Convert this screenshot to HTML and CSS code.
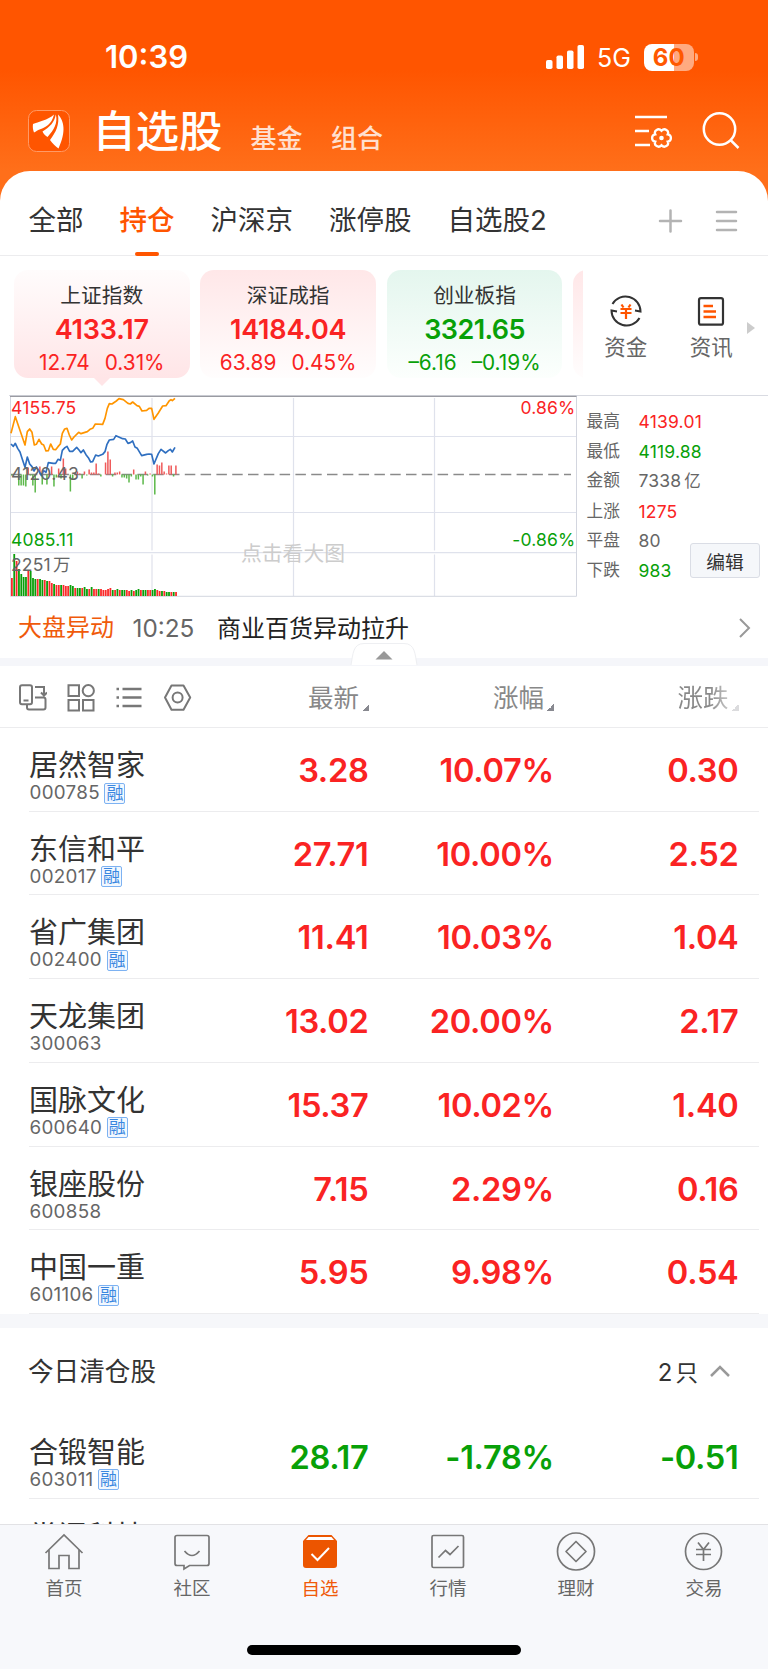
FILE: index.html
```html
<!DOCTYPE html>
<html lang="zh-CN">
<head>
    <meta charset="UTF-8">
    <meta name="viewport" content="width=device-width, initial-scale=1.0">
    <title>自选股</title>
    <link rel="stylesheet" href="styles.css">
</head>
<body>
    <div class="app">
        <header class="header">
            <div class="status-bar">
                <span class="time">10:39</span>
                <svg class="signal" width="38" height="24" fill="#fff">
                    <rect x="0" y="15" width="6.5" height="9" rx="1.8"/>
                    <rect x="10.5" y="10.5" width="6.5" height="13.5" rx="1.8"/>
                    <rect x="21" y="5.5" width="6.5" height="18.5" rx="1.8"/>
                    <rect x="31.5" y="0" width="6.5" height="24" rx="1.8"/>
                </svg>
                <span class="network">5G</span>
                <span class="battery">60</span>
                <span class="battery-tip"></span>
            </div>
            <div class="title-bar">
                <svg class="logo" width="42" height="42" viewBox="0 0 42 42">
                    <rect x=".5" y=".5" width="41" height="41" rx="8" fill="#ff5500" stroke="#ff9a66"/>
                    <g fill="#fff">
                        <path d="M5 14C10 12 20 10 26 4.500C24 14 17 18 11.500 19.500C10 20 8 21.500 6 22.500C5 20 4.500 17 5 14Z"/>
                        <path d="M14.500 21.500C22 17 26.500 12 27.800 4.500C30 13 26 20 19.500 27C17.500 26 15.500 24 14.500 21.500Z"/>
                        <path d="M30 4.500C36 11 38.500 21 30.500 38.500C27.500 36.500 24.500 33.500 22 30C28 22 31.500 15 30 4.500Z"/>
                    </g>
                </svg>
                <h1>自选股</h1>
                <a class="top-link">基金</a>
                <a class="top-link">组合</a>
                <svg class="manage" width="38" height="36" fill="none" stroke="#fff" stroke-width="2.500">
                    <path d="M0 5H32M0 19H14M0 33H15"/>
                    <path stroke-width="2.300" transform="translate(26.500 26)" d="M6.200-3.600C10.500-3 10.500 3 6.200 3.600C8 7.500 3 10.500 0 7.200C-3 10.500-8 7.500-6.200 3.600C-10.500 3-10.500-3-6.200-3.600C-8-7.500-3-10.500 0-7.200C3-10.500 8-7.500 6.200-3.600Z"/>
                    <circle cx="26.500" cy="26" r="2.300" fill="#fff" stroke="none"/>
                </svg>
                <svg class="search" width="38" height="38" fill="none" stroke="#fff" stroke-width="2.500">
                    <circle cx="17.500" cy="17" r="15.700"/>
                    <path d="M28.500 28L36.500 36"/>
                </svg>
            </div>
        </header>

        <main class="sheet">
            <nav class="tabs">
                <a>全部</a>
                <a class="active">持仓</a>
                <a>沪深京</a>
                <a>涨停股</a>
                <a>自选股2</a>
                <svg class="tab-tools" width="82" height="24" fill="none" stroke="#b3b3b3" stroke-width="2.500" stroke-linecap="round">
                    <path d="M2 12H23M12.500 1.500V22.500"/>
                    <path d="M59 3H78M59 12H78M59 21H78"/>
                </svg>
            </nav>

            <!-- Índices -->
            <section class="indices">
                <div class="cards">
                    <div class="card up selected">
                        <h2>上证指数</h2>
                        <strong>4133.17</strong>
                        <p><span>12.74</span><span>0.31%</span></p>
                    </div>
                    <div class="card up">
                        <h2>深证成指</h2>
                        <strong>14184.04</strong>
                        <p><span>63.89</span><span>0.45%</span></p>
                    </div>
                    <div class="card down">
                        <h2>创业板指</h2>
                        <strong>3321.65</strong>
                        <p><span>–6.16</span><span>–0.19%</span></p>
                    </div>
                    <div class="card up"></div>
                </div>
                <div class="quick">
                    <svg width="34" height="34" fill="none" stroke="#333" stroke-width="2">
                        <path d="M3.500 10A15 15 0 0 1 31.500 17.500L26 16.500M30.500 24A15 15 0 0 1 2.500 16.500L8 17.500"/>
                        <path stroke="#ff5500" stroke-width="2.200" d="M12.500 10.500L14.500 13.500M21.500 10.500L19.500 13.500M11.500 15H22.500M11.500 19H22.500M17 15V25"/>
                    </svg>
                    <span>资金</span>
                </div>
                <div class="quick">
                    <svg width="34" height="34" fill="none">
                        <rect x="5" y="4.200" width="24" height="26.500" rx="2" stroke="#333" stroke-width="2.200"/>
                        <path stroke="#ff5500" stroke-width="2.400" d="M9.500 12H19M9.500 17.500H22M9.500 23H22"/>
                    </svg>
                    <span>资讯</span>
                </div>
                <svg class="more" width="8" height="12"><path d="M0 0L8 6L0 12Z" fill="#ccc"/></svg>
            </section>

            <section class="market">
                <svg class="chart" width="568" height="202">
                    <g fill="none" stroke="#dfe2ec" stroke-width="1.200">
                        <path d="M1 41.500H567M1 117.500H567M1 157.700H567" />
                        <path d="M143 3V155.500M284.500 3V155.500M425.500 3V155.500M143 159.500V201M284.500 159.500V201M425.500 159.500V201"/>
                    </g>
                    <path d="M1.500 1V201.300H567.500V1" fill="none" stroke="#d3d6df"/>
                    <path d="M1 1.300H567.500" stroke="#9a9ba2" stroke-width="1.200"/>
                    <text class="watermark" x="232" y="165.500">点击看大图</text>
                    <path d="M2 79.500H562" stroke="#8a8a8a" stroke-width="1.400" stroke-dasharray="10.500 5.300"/>
                    <g id="flow"></g>
                    <g id="volume"></g>
                    <g transform="translate(-9 -10) scale(.3333)" fill="none" stroke-width="5" stroke-linejoin="round">
                        <polyline stroke="#ff9500" points="33,145 46,95 75,180 82,140 89,132 96,142 103,180 109,178 117,163 125,177 131,180 138,198 145,197 152,177 160,193 167,194 174,185 181,177 187,145 194,132 201,130 208,150 215,165 222,156 236,142 243,146 262,140 270,133 278,130 286,117 308,118 315,100 322,70 328,56 336,57 349,48 357,41 370,44 384,55 391,57 398,51 411,62 418,64 426,78 440,76 447,70 455,70 462,103 475,84 488,63 498,62 508,47 513,44 517,47 525,40"/>
                        <polyline stroke="#2f6fc0" points="33,177 40,184 46,175 53,190 60,201 67,223 75,247 82,216 89,237 96,245 102,258 109,246 117,258 124,272 131,257 138,262 145,233 160,235 167,235 174,223 181,226 187,196 195,188 201,184 209,199 218,199 230,187 237,195 243,203 250,195 258,209 265,218 272,231 278,230 287,210 295,213 308,208 315,200 321,178 328,165 341,163 348,152 368,161 376,162 384,175 391,173 398,168 405,186 412,190 425,212 440,208 447,207 455,208 462,237 475,206 483,193 497,204 505,197 511,193 517,201 525,187"/>
                    </g>
                    <g class="axis">
                        <text class="red" x="2" y="19">4155.75</text>
                        <text class="gray" x="2" y="85">4120.43</text>
                        <text class="green" x="2" y="151">4085.11</text>
                        <text class="gray" x="2" y="176">2251<tspan dx="2">万</tspan></text>
                        <text class="red" x="566.500" y="19" text-anchor="end">0.86%</text>
                        <text class="green" x="566.500" y="151" text-anchor="end">-0.86%</text>
                    </g>
                </svg>
                <div class="detail">
                    <dl>
                        <dt>最高</dt><dd class="red">4139.01</dd>
                        <dt>最低</dt><dd class="green">4119.88</dd>
                        <dt>金额</dt><dd>7338<i>亿</i></dd>
                        <dt>上涨</dt><dd class="red">1275</dd>
                        <dt>平盘</dt><dd>80</dd>
                        <dt>下跌</dt><dd class="green">983</dd>
                    </dl>
                    <button class="edit">编辑</button>
                </div>
            </section>

            <section class="news">
                <b>大盘异动</b>
                <time>10:25</time>
                <span>商业百货异动拉升</span>
                <svg width="12" height="20" fill="none" stroke="#999" stroke-width="2"><path d="M1 1L10 10L1 19"/></svg>
                <svg class="fold" width="68" height="24">
                    <path d="M1 23C3 12 3 1.500 14 1.500H54C65 1.500 65 12 67 23" fill="#fff" stroke="#eeeff2"/>
                    <path d="M25.500 17.500L34 9L42.500 17.500Z" fill="#999"/>
                </svg>
            </section>

            <section class="list-head">
                <div class="tools">
                    <svg width="28" height="28">
                        <rect x="1" y="1.200" width="12" height="19" rx="2"/>
                        <path d="M4.500 16.500H9.500M16 3H25V10M22 8.500L25 11.500L28 8.500M16 13.500H24.500Q26.500 13.500 26.500 15.500V23.500Q26.500 25.500 24.500 25.500H10Q8 25.500 8 23.500V21"/>
                    </svg>
                    <svg width="28" height="28">
                        <path d="M1.500 1.200H12V12H1.500ZM1.500 16H12V26.500H1.500ZM16 16H26.500V26.500H16Z"/>
                        <circle cx="21.300" cy="6.700" r="5.600"/>
                    </svg>
                    <svg width="28" height="28">
                        <path d="M6.500 5H25.500M6.500 13.500H25.500M6.500 22H25.500M.5 5H3M.5 13.500H3M.5 22H3" stroke-width="2.400"/>
                    </svg>
                    <svg width="28" height="28">
                        <path d="M7.500 1.500H19.500L26.200 13.500L19.500 25.700H7.500L1 13.500Z" stroke-linejoin="round"/>
                        <circle cx="13.600" cy="13.500" r="5"/>
                    </svg>
                </div>
                <span class="col">最新</span>
                <span class="col">涨幅</span>
                <span class="col faded">涨跌</span>
            </section>

            <section class="stocks">
                <div class="stock">
                    <div class="name">居然智家<small>000785<em>融</em></small></div>
                    <b>3.28</b><b>10.07%</b><b>0.30</b>
                </div>
                <div class="stock">
                    <div class="name">东信和平<small>002017<em>融</em></small></div>
                    <b>27.71</b><b>10.00%</b><b>2.52</b>
                </div>
                <div class="stock">
                    <div class="name">省广集团<small>002400<em>融</em></small></div>
                    <b>11.41</b><b>10.03%</b><b>1.04</b>
                </div>
                <div class="stock">
                    <div class="name">天龙集团<small>300063</small></div>
                    <b>13.02</b><b>20.00%</b><b>2.17</b>
                </div>
                <div class="stock">
                    <div class="name">国脉文化<small>600640<em>融</em></small></div>
                    <b>15.37</b><b>10.02%</b><b>1.40</b>
                </div>
                <div class="stock">
                    <div class="name">银座股份<small>600858</small></div>
                    <b>7.15</b><b>2.29%</b><b>0.16</b>
                </div>
                <div class="stock">
                    <div class="name">中国一重<small>601106<em>融</em></small></div>
                    <b>5.95</b><b>9.98%</b><b>0.54</b>
                </div>
            </section>

            <section class="cleared">
                <div class="cleared-head">
                    <h3>今日清仓股</h3>
                    <span>2<i>只</i></span>
                    <svg width="20" height="12" fill="none" stroke="#999" stroke-width="2.500"><path d="M1 11L10 2L19 11"/></svg>
                </div>
                <div class="stock loss">
                    <div class="name">合锻智能<small>603011<em>融</em></small></div>
                    <b>28.17</b><b>-1.78%</b><b>-0.51</b>
                </div>
                <div class="stock loss">
                    <div class="name">掌阅科技</div>
                </div>
            </section>
        </main>

        <footer class="tabbar">
            <div class="tabbar-items">
                <a>
                    <svg width="40" height="40"><path d="M1.500 21L20 3L38.500 21M5 18V36.500H15V23.500H25V36.500H35V18"/></svg>
                    首页
                </a>
                <a>
                    <svg width="40" height="40"><path d="M5 3.500H35Q37 3.500 37 5.500V31.500Q37 33.500 35 33.500H17.500L12 37V33.500H5Q3 33.500 3 31.500V5.500Q3 3.500 5 3.500ZM12.500 19Q20 28 27.500 19"/></svg>
                    社区
                </a>
                <a class="active">
                    <svg width="40" height="40">
                        <path d="M8.500 3H31.500L37 9V33Q37 36 34 36H6Q3 36 3 33V9Z" fill="#ec5500" stroke="none"/>
                        <path d="M8.500 5H31.500L34 8H6Z" fill="#fff" stroke="none"/>
                        <path d="M11.500 22L17.500 28L29 16" stroke="#fff" stroke-width="2"/>
                    </svg>
                    自选
                </a>
                <a>
                    <svg width="40" height="40"><rect x="4" y="3.500" width="31.500" height="32" rx="1.500"/><path d="M10.500 25.500L17.500 18.500L22 22.500L30.500 14"/></svg>
                    行情
                </a>
                <a>
                    <svg width="40" height="40"><circle cx="20" cy="19.500" r="18.500"/><path d="M20 9.500L30 19.500L20 29.500L10 19.500Z" stroke-linejoin="round"/></svg>
                    理财
                </a>
                <a>
                    <svg width="40" height="40"><circle cx="19.500" cy="19.500" r="18"/><path d="M14 10.500L19.500 17.500L25 10.500M12 17.500H27M12 22.500H27M19.500 17.500V29"/></svg>
                    交易
                </a>
            </div>
            <div class="home-indicator"></div>
        </footer>
    </div>

    <script>
        const SVG_NS = 'http://www.w3.org/2000/svg';
        const step = 2.345;

        const flow = [-1, 0, 0, -11, -11, -11, -12, 7, -1, -11, -18, 0, 8, -10, 0, -10, 1, 8, -12, -3, 6, -4, 16, 6,
            0, -17, -5, 1, 3, 1, -4, 3, -1, 5, 2, 2, 11, 1, -2, 0, 12, 23, 15, -2, 2, 2, 3, -3, -3, -4, -8, -2, 5,
            -5, -5, -2, -10, 3, -1, 1, -2, -20, 10, 9, 12, 3, 1, 9, 9, -2, 9];

        // positivo = vermelho, negativo = verde
        const volume = [18, -42, 35, -27, -22, -19, -19, 25, -25, -18, -17, 17, -17, -16, 16, -15, 15, 13, -12, 11,
            11, -11, 11, 10, 10, -11, -10, 8, -8, -8, 8, -9, -7, 7, -9, 7, 7, -7, 7, 6, 6, 7, 8, -6, 6, -7, 6, -6,
            -6, 6, 5, -6, 5, -6, -7, 6, -6, -6, 6, 6, -6, -7, 6, 5, -5, 5, -4, -4, 4, -4, 4];

        function drawBars(id, values, base, fromBottom, up, down, width) {
            const group = document.getElementById(id);
            values.forEach((value, i) => {
                const bar = document.createElementNS(SVG_NS, 'rect');
                const height = Math.abs(value);
                bar.setAttribute('x', 2 + i * step);
                bar.setAttribute('y', fromBottom || value > 0 ? base - height : base);
                bar.setAttribute('width', width);
                bar.setAttribute('height', height);
                bar.setAttribute('fill', value > 0 ? up : down);
                group.appendChild(bar);
            });
        }

        drawBars('flow', flow, 79.5, false, '#ef5a5a', '#5cb84a', 1.5);
        drawBars('volume', volume, 201, true, '#fa2a2a', '#0a9e0a', 1.8);
    </script>
</body>
</html>
```

FILE: styles.css
```css
* {
    box-sizing: border-box;
}

body, h1, h2, h3, p, dl, dd {
    margin: 0;
}

body {
    font-family: Inter, "Noto Sans CJK SC", sans-serif;
    color: #333;
    background: #fff;
}

b, strong, em, i, h1, h2, h3 {
    font-style: normal;
    font-weight: 400;
}

svg {
    display: block;
    flex: none;
}

.app {
    display: flex;
    flex-direction: column;
    width: 768px;
    height: 1669px;
    overflow: hidden;
}

.red { color: #fa2323; fill: #fa2323; }
.green { color: #08a008; fill: #08a008; }
.gray { color: #666; fill: #666; }

/* Cabeçalho */
.header {
    flex: none;
    height: 205px;
    margin-bottom: -34px;
    color: #fff;
    background: linear-gradient(#ff5500 70px, #ff6f1a 171px);
}

.status-bar {
    display: flex;
    align-items: center;
    height: 72px;
    padding: 42px 0 0 105px;
}

.time {
    width: 441px;
    font-size: 31px;
    font-weight: 600;
    line-height: 30px;
}

.network {
    width: 46px;
    margin-left: 13px;
    font-size: 25px;
    line-height: 30px;
    padding-top: 2px;
}

.battery {
    width: 49.5px;
    height: 27px;
    margin-left: 1px;
    border-radius: 8px;
    background: linear-gradient(90deg, #fff 60%, #ffaa80 60%);
    color: #ff5800;
    font-size: 24px;
    font-weight: 700;
    line-height: 27px;
    text-align: center;
}

.battery-tip {
    width: 3px;
    height: 8px;
    margin-left: 1.5px;
    border-radius: 0 3px 3px 0;
    background: #ffaa80;
}

.title-bar {
    display: flex;
    height: 99px;
    padding: 38px 0 0 28px;
}

.title-bar h1 {
    width: 158px;
    margin-left: 22.5px;
    font-size: 43.3px;
    font-weight: 500;
    line-height: 42px;
    white-space: nowrap;
}

.top-link {
    width: 80.5px;
    padding-top: 16px;
    font-size: 26px;
    line-height: 25px;
    color: #ffe0d0;
    font-weight: 500;
}

.manage {
    margin: 2px 0 0 223.5px;
}

.search {
    margin: 2px 0 0 28.5px;
}

/* Abas */
.sheet {
    position: relative;
    flex: none;
    height: 1353px;
    overflow: hidden;
    border-radius: 30px 30px 0 0;
    background: #fff;
}

.tabs {
    display: flex;
    gap: 36px;
    height: 85px;
    padding-left: 28.5px;
    border-bottom: 1px solid #ececee;
    font-size: 27.5px;
    line-height: 99px;
}

.tabs .active {
    display: flex;
    flex-direction: column;
    align-items: center;
    height: 85px;
    color: #ff5500;
    font-weight: 500;
}

.tabs .active::after {
    content: "";
    width: 24px;
    height: 3.5px;
    margin-top: -18px;
    border-radius: 2px;
    background: #ff5500;
}

.tab-tools {
    margin: 37.5px 0 0 75px;
}

/* Cartões dos índices */
.indices {
    display: flex;
    height: 140px;
    padding: 14px 0 0 14px;
}

.cards {
    display: flex;
    gap: 10.9px;
    width: 569px;
    overflow: hidden;
}

.card {
    flex: none;
    width: 175.5px;
    height: 108px;
    border-radius: 14px;
    text-align: center;
    color: #fa2323;
    background: linear-gradient(#ffe7e8, #fffdfd);
}

.card.selected {
    display: flex;
    flex-direction: column;
    align-items: center;
    background: linear-gradient(#fffcfc, #ffe5e7);
}

.card.selected::after {
    content: "";
    border: 8px solid transparent;
    border-top-color: #ffe5e7;
    border-bottom: 0;
}

.card.down {
    color: #08a008;
    background: linear-gradient(#e4f6ee, #fcfffd);
}

.card h2 {
    padding-top: 11px;
    font-size: 20.7px;
    line-height: 30px;
    color: #333;
}

.card strong {
    display: block;
    font-size: 27px;
    font-weight: 600;
    letter-spacing: -0.2px;
    line-height: 37px;
}

.card.down strong {
    letter-spacing: -0.6px;
}

.card p {
    display: flex;
    justify-content: center;
    gap: 15px;
    font-size: 20.8px;
    line-height: 30px;
}

.quick {
    display: flex;
    flex-direction: column;
    align-items: center;
    width: 85.5px;
    padding-top: 24px;
    font-size: 21.5px;
    line-height: 39px;
    color: #666;
}

.more {
    margin: 52px 0 0 -7px;
}

/* Gráfico */
.market {
    display: flex;
    height: 203px;
    margin-top: -1px;
    padding-left: 9px;
    background: linear-gradient(#d9dbe2, #d9dbe2) 9px 0 / 100% 1px no-repeat;
}

.axis {
    font-size: 17.5px;
    letter-spacing: 0.2px;
}

.watermark {
    font-size: 20.8px;
    fill: #ccc;
}

.detail {
    display: flex;
    align-items: flex-end;
    padding: 0 0 20px 9.5px;
}

.detail dl {
    display: grid;
    grid-template-columns: 52px 51.5px;
    align-self: flex-start;
    padding-top: 12px;
    font-size: 17.5px;
    letter-spacing: 0.2px;
    line-height: 29.6px;
    color: #666;
}

.detail dt {
    font-size: 16.7px;
    letter-spacing: 0;
}

.detail dd {
    white-space: nowrap;
}

.detail dd i {
    margin-left: 3px;
    font-size: 16.5px;
}

.edit {
    width: 70px;
    height: 35px;
    padding: 0;
    border: 1px solid #dadde5;
    border-radius: 3px;
    background: #f5f7fa;
    color: #333;
    font: 18.7px Inter, "Noto Sans CJK SC", sans-serif;
}

/* Notícia */
.news {
    position: relative;
    display: flex;
    align-items: center;
    height: 68px;
    padding: 0 17px 0 18px;
    border-bottom: 8px solid #f5f6fa;
    font-size: 24px;
    line-height: 30px;
}

.news b {
    width: 114.5px;
    color: #f05a0a;
}

.news time {
    width: 84.5px;
    font-size: 24.3px;
    color: #666;
}

.news span {
    flex: 1;
    padding-top: 1px;
    color: #222;
}

.fold {
    position: absolute;
    left: 350px;
    bottom: -8px;
}

/* Cabeçalho da lista */
.list-head {
    display: grid;
    grid-template-columns: 191px 178px 185px 184.5px;
    height: 62px;
    border-bottom: 1px solid #ececee;
    color: #888;
}

.tools {
    display: flex;
    gap: 20.3px;
    padding: 17.5px 0 0 19px;
}

.tools svg {
    fill: none;
    stroke: #777;
    stroke-width: 2;
}

.col {
    display: flex;
    justify-content: flex-end;
    font-size: 25.5px;
    line-height: 63px;
}

.col::after {
    content: "";
    width: 7px;
    height: 7px;
    margin: 38px 0 0 3px;
    background: linear-gradient(135deg, transparent 50%, #888990 50%);
}

.col.faded {
    color: transparent;
    background: linear-gradient(90deg, #888 155px, #d0d0d0 178px);
    background-clip: text;
    -webkit-background-clip: text;
}

.col.faded::after {
    opacity: 0.3;
}

/* Lista de ações */
.stocks {
    border-bottom: 14px solid #f6f7fa;
}

.stock {
    display: grid;
    grid-template-columns: 180px 159.5px 185.5px 184.5px;
    height: 83.71px;
    margin: 0 9px 0 29px;
    border-bottom: 1px solid #ececee;
}

.stock b {
    font-size: 32.6px;
    font-weight: 600;
    letter-spacing: -0.3px;
    line-height: 84px;
    text-align: right;
    color: #fa2323;
}

.stock.loss b {
    color: #08a008;
}

.name {
    padding-top: 19px;
    font-size: 29px;
    line-height: 38px;
}

.name small {
    display: flex;
    align-items: center;
    height: 16px;
    margin-left: 0.5px;
    font-size: 18.8px;
    letter-spacing: 0.3px;
    color: #666;
}

.name em {
    width: 21px;
    height: 21px;
    margin-left: 4.5px;
    border: 1px solid #7db2f2;
    border-radius: 2px;
    background: #f2f8ff;
    color: #3a87e0;
    font-size: 17px;
    letter-spacing: 0;
    line-height: 18px;
    text-align: center;
}

.cleared-head {
    display: flex;
    align-items: center;
    height: 87px;
    padding: 0 38px 0 28px;
    font-size: 24px;
}

.cleared-head h3 {
    flex: 1;
    padding-bottom: 3px;
    font-size: 25.6px;
}

.cleared-head i {
    margin-left: 3px;
    font-size: 22.5px;
}

.cleared-head span {
    padding-bottom: 1px;
}

.cleared-head svg {
    margin-left: 12px;
}

/* Barra inferior */
.tabbar {
    position: relative;
    flex: 1;
    border-top: 1px solid #e2e2e5;
    background: #f7f8fb;
}

.tabbar-items {
    display: grid;
    grid-template-columns: repeat(6, 128px);
}

.tabbar a {
    display: flex;
    flex-direction: column;
    align-items: center;
    padding-top: 7px;
    font-size: 18.5px;
    line-height: 33px;
    color: #666;
}

.tabbar svg {
    fill: none;
    stroke: #777;
    stroke-width: 1.7;
}

.tabbar a.active {
    color: #f05a0a;
}

.home-indicator {
    width: 274px;
    height: 9.5px;
    margin: 40px auto 0;
    border-radius: 5px;
    background: #000;
}
```
